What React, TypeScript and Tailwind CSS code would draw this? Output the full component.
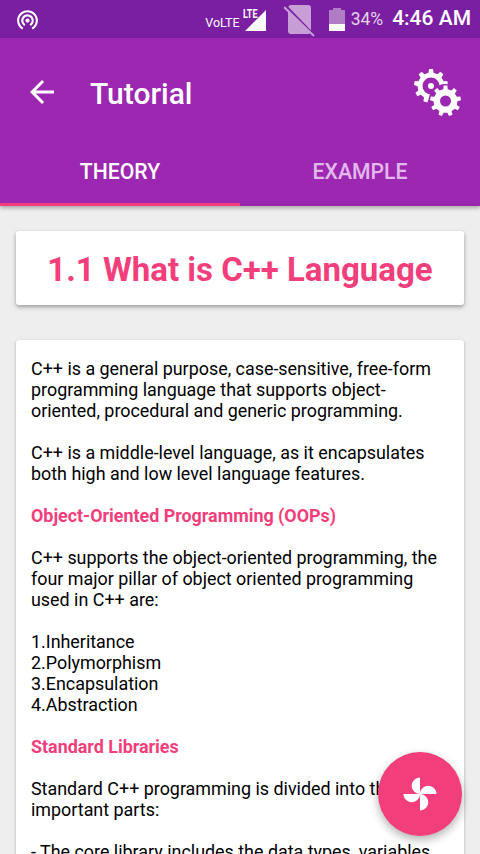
import { MdArrowBack, MdWifiTethering } from 'react-icons/md'

function gearPath(cx: number, cy: number, outer: number, inner: number, hole: number, teeth: number) {
  const pts: string[] = []
  const step = (Math.PI * 2) / teeth
  for (let i = 0; i < teeth; i++) {
    const a = i * step - Math.PI / 2
    const w = step * 0.2
    const corners = [
      [inner, a - w * 1.35],
      [outer, a - w * 0.85],
      [outer, a + w * 0.85],
      [inner, a + w * 1.35],
    ]
    corners.forEach(([r, t]) => pts.push(`${(cx + r * Math.cos(t)).toFixed(2)} ${(cy + r * Math.sin(t)).toFixed(2)}`))
  }
  const ring = `M${cx - hole} ${cy}a${hole} ${hole} 0 1 0 ${hole * 2} 0a${hole} ${hole} 0 1 0 ${-hole * 2} 0Z`
  return `M${pts.join('L')}Z${ring}`
}

function Gears() {
  return (
    <svg width="50" height="50" viewBox="0 0 50 50" fill="white" fillRule="evenodd">
      <path d={gearPath(18, 18, 17, 13.5, 8.5, 9)} />
      <circle cx="18" cy="18" r="3" />
      <circle cx="32.5" cy="33" r="17" fill="#9C27B0" />
      <path d={gearPath(32.5, 33, 15.5, 12, 5.5, 9)} />
    </svg>
  )
}

function Pinwheel() {
  return (
    <svg width="36" height="36" viewBox="0 0 24 24" fill="white">
      <path d="M12 12c0-3 2.500-5.500 5.500-5.500S23 9 23 12H12zm0 0c0 3-2.500 5.500-5.500 5.500S1 15 1 12h11zm0 0c-3 0-5.500-2.500-5.500-5.500S9 1 12 1v11zm0 0c3 0 5.500 2.500 5.500 5.500S15 23 12 23V12z" />
    </svg>
  )
}

function StatusBar() {
  return (
    <div className="h-[38px] bg-[#7B1FA2] flex items-center text-white pl-[15px] pr-[9px]">
      <MdWifiTethering size={25} />
      <div className="ml-auto flex items-center">
        <span className="text-[12.500px] mt-[9px] mr-[5px]">VoLTE</span>
        <div className="relative w-[24px] h-[22px] mt-[1px] mr-[15px]">
          <span className="absolute left-[-2px] top-0 text-[12px] leading-[10px] font-bold scale-x-75 origin-left">LTE</span>
          <svg className="absolute left-0 top-0" width="24" height="22" viewBox="0 0 24 22" fill="white">
            <path d="M0 22L21 1V22Z" />
          </svg>
        </div>
        <svg width="32" height="36" viewBox="0 0 32 36" className="mr-[13px]">
          <path d="M6 4h18a3 3 0 0 1 3 3v23a3 3 0 0 1-3 3H7a3 3 0 0 1-3-3V6Z" fill="#C79ED6" />
          <path d="M1.500 4.500L30 34" stroke="#7B1FA2" strokeWidth="2" />
          <path d="M0 6L30 35" stroke="#C79ED6" strokeWidth="2" />
        </svg>
        <svg width="16" height="23" viewBox="0 0 16 23" className="mr-[6px]">
          <path d="M4 0h8v2h4v21H0V2h4Z" fill="#B07CC6" />
          <path d="M0 16h16v7H0Z" fill="white" />
        </svg>
        <span className="text-[17.500px] text-[#E6D3EC] mr-[9px]">34%</span>
        <span className="text-[21px] font-medium">4:46 AM</span>
      </div>
    </div>
  )
}

const pink = 'font-bold text-[#F23E7B]'

export default function App() {
  return (
    <div className="h-[854px] overflow-hidden relative bg-[#EEEEEE] font-['Roboto',sans-serif]">
      <StatusBar />

      <header className="bg-[#9C27B0] h-[168px] shadow-[0_2px_4px_rgba(0,0,0,0.3)] flex flex-col relative">
        <div className="h-[108px] flex items-center pl-[24px] text-white">
          <MdArrowBack size={36} />
          <h1 className="ml-[30px] mt-[2px] text-[30px] font-medium">Tutorial</h1>
          <div className="ml-auto mr-[17px] mt-[2px]">
            <Gears />
          </div>
        </div>
        <div className="flex flex-1">
          <div className="flex-1 flex items-start justify-center pt-[10px] border-b-[3px] border-[#F23E7B] text-white text-[21.200px] font-medium">THEORY</div>
          <div className="flex-1 flex items-start justify-center pt-[10px] text-[#E3B8EC] text-[21.200px] font-medium">EXAMPLE</div>
        </div>
      </header>

      <main className="px-[16px] pt-[25px]">
        <div className="bg-white rounded-[3px] h-[74px] pt-[3px] flex items-center justify-center shadow-[0_2px_4px_rgba(0,0,0,0.35)]">
          <h2 className="text-[33px] font-bold text-[#F23E7B]">1.1 What is C++ Language</h2>
        </div>

        <div className="bg-white rounded-[3px] mt-[35px] pt-[18px] pl-[15px] pr-[14px] text-[17.900px] leading-[21px] text-black shadow-[0_1px_3px_rgba(0,0,0,0.3)] space-y-[21px]">
          <p>C++ is a general purpose, case-sensitive, free-form programming language that supports object-oriented, procedural and generic programming.</p>
          <p>C++ is a middle-level language, as it encapsulates both high and low level language features.</p>
          <p className={pink}>Object-Oriented Programming (OOPs)</p>
          <p>C++ supports the object-oriented programming, the four major pillar of object oriented programming used in C++ are:</p>
          <p>
            1.Inheritance<br />
            2.Polymorphism<br />
            3.Encapsulation<br />
            4.Abstraction
          </p>
          <p className={pink}>Standard Libraries</p>
          <p>Standard C++ programming is divided into three important parts:</p>
          <p>- The core library includes the data types, variables and literals, etc.</p>
        </div>
      </main>

      <button className="absolute left-[378px] top-[752px] w-[84px] h-[84px] rounded-full bg-[#F23E7B] flex items-center justify-center shadow-[0_4px_10px_rgba(0,0,0,0.3)]">
        <Pinwheel />
      </button>
    </div>
  )
}
